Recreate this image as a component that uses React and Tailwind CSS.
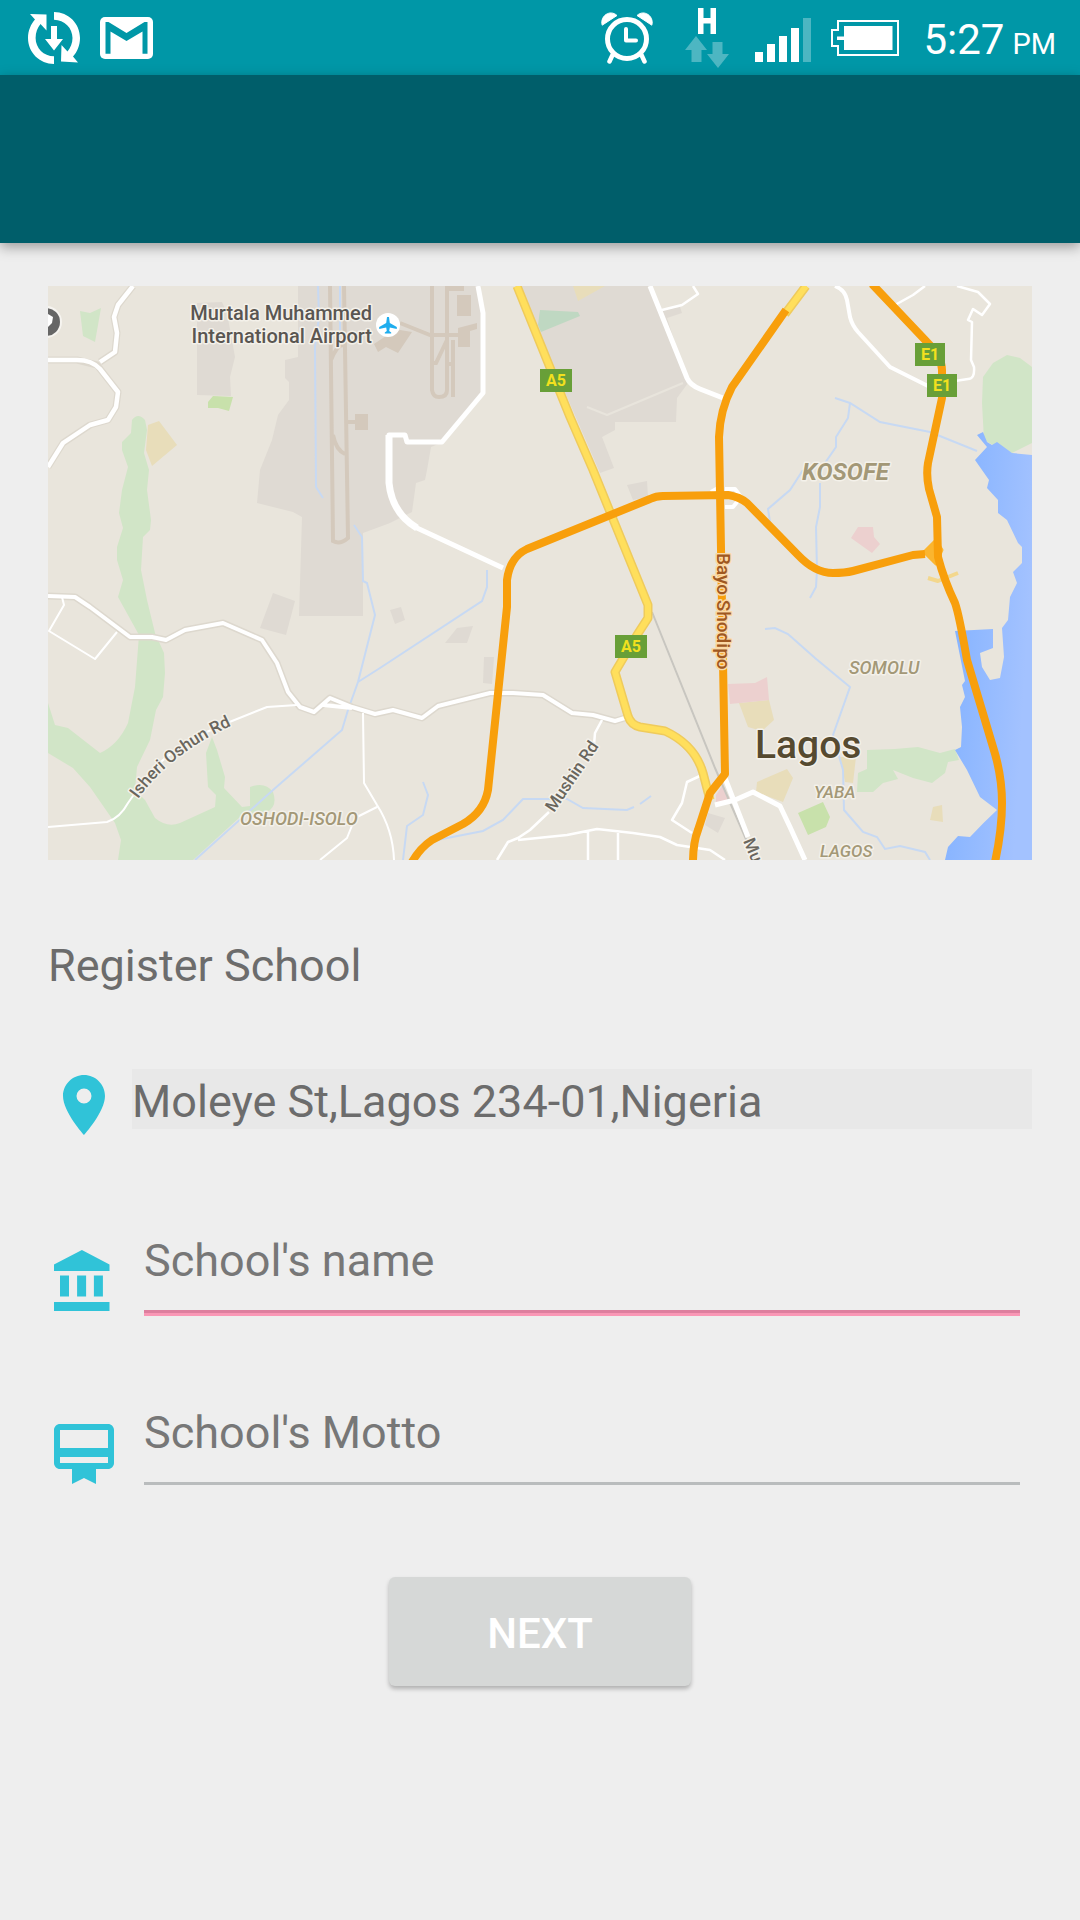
import React from "react";

const fillPath = {
  land: "#e9e5dc",
  built: "#dfdad3",
  park: "#d1e5c7",
  grass: "#c8e1ab",
  sand: "#e8ddba",
  pink: "#ecd0cf",
  apron: "#d4c9bc",
};

function SyncIcon() {
  return (
    <svg viewBox="0 0 52 52" className="size-[52px]" fill="#fff" aria-hidden="true">
      <path d="M26 0c14.500 0 26 11.600 26 26 0 7.500-3 14.300-7 18.500L50 50.500l-17-1L33.500 33l6 6.500C42.500 36 44.500 31 44.500 26 44.500 16 36.500 7.700 26 7.700Z" />
      <path d="M26 52C11.600 52 0 40.400 0 26 0 18.500 3 12 7 7.500L2 2l16.500.5V18.500L12.500 12C9.500 15.500 7.600 20.500 7.600 26c0 10 8 18.300 18.400 18.300Z" />
      <path d="M23 14h6v13h6L26 38.500 17 27h6Z" />
    </svg>
  );
}

function MailIcon() {
  return (
    <svg viewBox="0 0 53 42" className="h-[42px] w-[53px]" aria-hidden="true">
      <rect width="53" height="42" rx="5" fill="#fff" />
      <path d="M5.500 5H8.500L26.500 16 44.500 5h3v31.700h-5V14.500L26.500 24 10.500 14.500v22.200h-5Z" fill="#0097a7" />
    </svg>
  );
}

function AlarmIcon() {
  return (
    <svg viewBox="0 0 52 52" className="size-[52px]" fill="none" stroke="#fff" strokeLinecap="round" strokeLinejoin="round" aria-hidden="true">
      <circle cx="26" cy="27" r="19.500" strokeWidth="5" />
      <path d="M25 17v11.500h10" strokeWidth="4" />
      <path d="M11.500 43 8.500 49.500M40.500 43l3 6.500" strokeWidth="4.500" />
      <path d="M1 12.500C-1 4 9 -3 16 3.500L1.500 13ZM51 12.500C53 4 43 -3 36 3.500L50.500 13Z" fill="#fff" strokeWidth="1" />
    </svg>
  );
}

function DataIcon() {
  return (
    <svg viewBox="0 0 44 60" className="h-[60px] w-[44px]" aria-hidden="true">
      <path d="M13 0h5.500v10h7V0H31v26h-5.500V15.500h-7V26H13Z" fill="#fff" />
      <path d="M11 28 22 42h-5.500v12h-10V42H0ZM27.500 34h10v12H44L33 60 22 46h5.500Z" fill="#4db6c2" />
    </svg>
  );
}

function SignalIcon() {
  return (
    <svg viewBox="0 0 56 44" className="h-[44px] w-[56px]" fill="#fff" aria-hidden="true">
      <path d="M0 34h8v10H0ZM12 26h8v18h-8ZM24 18h8v26h-8ZM36 10h8v34h-8Z" />
      <path d="M48 0h8v44h-8Z" fill="#4db6c2" />
    </svg>
  );
}

function BatteryIcon() {
  return (
    <svg viewBox="0 0 68 36" className="h-[36px] w-[68px]" aria-hidden="true">
      <path d="M7 1H67V35H7V26H1V10H7Z" fill="none" stroke="#fff" strokeWidth="2" />
      <path d="M13 6H61.500V30H13V20H6V16.500H13Z" fill="#fff" />
    </svg>
  );
}

const PIN = "M12 2C8.130 2 5 5.130 5 9c0 5.250 7 13 7 13s7-7.750 7-13c0-3.870-3.130-7-7-7zm0 9.500a2.500 2.500 0 0 1 0-5 2.500 2.500 0 0 1 0 5z";
const BANK = "M4 10.500v7h3v-7H4zm5.700 0v7h3v-7h-3zM2 22.300h18.500v-3H2v3zm13.300-11.800v7h3v-7h-3zm-4-8.500L2 6.800v2.200h18.500V6.800l-9.200-4.800z";
const CARD = "M20 2H4c-1.110 0-2 .89-2 2v11c0 1.110.89 2 2 2h4v5l4-2 4 2v-5h4c1.110 0 2-.89 2-2V4c0-1.110-.89-2-2-2zm0 13H4v-2h16v2zm0-5H4V4h16v6z";

function FieldIcon({ d }) {
  return (
    <svg viewBox="0 0 24 24" className="size-[72px] shrink-0" fill="#30c3d8" aria-hidden="true">
      <path d={d} />
    </svg>
  );
}

function Shield({ x, y, w, label }) {
  return (
    <g>
      <rect x={x} y={y} width={w} height="23" fill="#689f38" />
      <text x={x + w / 2} y={y + 17} textAnchor="middle" fontSize="16" fontWeight="700" fill="#f2e01e">{label}</text>
    </g>
  );
}

function MapView() {
  return (
    <svg viewBox="48 286 984 574" className="block w-full" role="img" aria-label="Map of Lagos" fontFamily="Roboto, sans-serif">
      <defs>
        <linearGradient id="sea" x1="0" y1="0" x2="1" y2="0.3">
          <stop offset="0" stopColor="#7fb0ff" />
          <stop offset="1" stopColor="#a3c2ff" />
        </linearGradient>
        <path id="isheri" d="M138 799Q175 747 250 718" />
      </defs>
      <rect x="48" y="286" width="984" height="574" fill={fillPath.land} />

      <g fill={fillPath.built}>
        <path d="M298 286V357L285 360V378L289 382V400L278 415 272 440 260 470 257 503 293 512 302 517 299 616H363V533L390 523 412 512 416 483 425 480 427 470 431 447 443 442 483 393 481 286Z" />
        <path d="M197 303 222 302 227 313 235 357 230 377 231 396 197 395Z" />
        <path d="M519 286H648L662 310 680 307 682 313 667 318 688 383 677 398 676 422H615V430L602 437 614 468 600 473 567 397Z" />
        <path d="M627 485 647 481 648 497 633 500ZM273 593 295 601 286 635 260 628ZM390 610 401 607 405 620 395 624ZM445 643 457 628 473 626 467 643ZM484 657H494L492 684 483 683ZM708 813 725 818 718 833 705 825Z" />
      </g>

      <g fill={fillPath.park}>
        <path d="M80 311 90 313 101 308 95 342 83 336Z" />
        <path d="M132 420Q138 412 145 420L147 430 144 453 149 470 147 490 151 520 150 530 143 537 141 570 147 600 155 633 164 653 165 673 163 697 156 710 150 740 137 767 135 790 145 800 155 818Q167 828 180 823L215 807 216 795 208 787 206 753 212 737 217 750 225 777 224 788 242 807 250 806V787Q265 781 273 792 278 806 267 812L240 817 193 860H118L121 840 115 823 90 787 73 768 48 753V703L55 725 68 728 100 753Q118 745 128 723L135 687 139 635 118 597 123 580 117 560V547L123 528 119 513 122 490 128 467 122 450V442L131 433Z" />
        <path d="M1007 355 993 363 983 377 982 403 984 440 993 445 1012 453 1032 443V367L1020 358Z" />
        <path d="M867 750 895 749 918 747 940 753 955 749 959 760 948 762 945 773 932 783 913 778 893 770 898 779 883 783 873 792H857L858 773 867 769Z" />
      </g>
      <path d="M540 310 578 312 580 316 541 332 538 325Z" fill="#bfd8c2" />
      <path d="M208 402 213 396 233 397 229 411 218 408H208ZM798 813 823 802 830 817 826 827 808 835Z" fill={fillPath.grass} />
      <path d="M148 425 159 421 177 445 152 466 146 450ZM573 286H605L578 301ZM739 703 769 700 774 720 762 731 748 727ZM757 782 787 769 793 778 783 802 756 792ZM840 757H856L853 783 845 782ZM933 807 942 805 943 822 930 820Z" fill={fillPath.sand} />
      <path d="M728 684 755 683 767 677 769 700 730 704ZM858 527H873L874 537 880 544 872 553 851 538ZM716 795 722 786 731 800 716 802Z" fill={fillPath.pink} />

      <path
        d="M983 432 987 442 992 445 997 442 1012 453 1032 455V860H945L948 847 958 836 970 837Q983 823 997 810L980 797 967 770 955 750 961 747 962 727 960 707 965 697 962 685 965 681 955 631 993 629V648L980 653 982 667 990 680 1000 678 1004 657 1002 628 1008 620 1010 597 1017 583 1013 572 1022 563V547L1018 543 1007 520 998 513V500L987 488 989 480 975 460 987 447 977 435Z"
        fill="url(#sea)"
      />

      <g fill="none" stroke={fillPath.apron} strokeWidth="5">
        <path d="M330 286 333 541Q340 545 348 538L344 286M331 360Q337 345 343 345M333 435Q336 450 345 454M346 422H357" strokeWidth="4" />
        <path d="M432 286V390Q433 397 439 397 447 397 447 390V286M453 340V397M400 323 430 335H458M433 363H436L447 340M446 364H455" strokeWidth="4" />
      </g>
      <path d="M355 414H368V430H355ZM447 286H464V291H447ZM457 295H471V316H457ZM458 328 477 323V329L470 331V347H458ZM374 344 386 336 400 330 412 332 398 353 386 347 378 352Z" fill={fillPath.apron} />

      <g fill="none" stroke="#c7d9f3" strokeWidth="2">
        <path d="M318 286 319 317 315 347 316 487 323 498M340 286V330M354 525 362 537 363 581 367 583 375 615 358 682 348 710 342 730 273 790 195 860M358 682 380 668 482 601 487 587V570" />
        <path d="M423 782 428 795 423 815 407 826 403 860M437 840 483 831 503 820 523 799H567L583 808 627 810 634 807M640 804 651 796" />
        <path d="M835 398 850 403 880 422 930 432 977 451M850 403 848 418 836 437V447L825 463M803 470 790 490 768 509 770 522M820 483V507L816 527 817 570 816 587 810 598" />
        <path d="M765 629 775 628 788 634 815 658 850 687 833 735 843 770 844 810 863 832 877 837 885 849 900 846 925 852 930 860" />
      </g>

      <path d="M652 612 715 768 755 860" fill="none" stroke="#c8c6c0" strokeWidth="2" />

      <g fill="none" strokeLinejoin="round">
        <g stroke="#ddd8ce">
          <path d="M133 286 118 305 114 317 117 333 115 352 100 362M48 360H77L97 365 118 392 116 407 108 420 90 425 63 443 48 467M48 596 75 597 90 607 130 637H152L166 640 185 630 223 623 262 640 277 663 288 692 300 707 314 712 330 698 352 707 375 714 393 710 422 718 438 706 490 693H513L543 695 572 713 593 715 615 721 628 717" strokeWidth="7" />
        </g>
        <g stroke="#fff">
          <path d="M133 286 118 305 114 317 117 333 115 352 100 362M48 360H77Q92 360 100 369L118 392 116 407 108 420 90 425 63 443 48 467" strokeWidth="4.500" />
          <path d="M48 596 75 597 90 607 130 637H152L166 640 185 630 223 623 262 640 277 663 288 692 300 707 314 712 330 698 352 707 375 714 393 710 422 718 438 706 490 693H513L543 695 572 713 593 715 615 721 628 717M323 705 352 708" strokeWidth="4" />
          <path d="M62 597 64 605 49 631 95 659 117 632M48 827 107 822Q120 818 128 803L135 793Q160 750 227 723L267 707 297 705M363 713 364 783 377 805Q393 830 394 860M377 807 355 818 347 838 320 860" strokeWidth="2" />
          <path d="M478 286 483 313V393L442 442H407L405 435H389V483Q392 513 417 528L503 568" strokeWidth="5" />
          <path d="M389 435V483Q392 513 417 528" strokeWidth="7" />
          <path d="M650 286 687 378Q690 385 700 389L723 398M725 778 748 837M715 805 735 800 753 792 780 806 790 827 805 860" strokeWidth="5" />
          <path d="M835 286Q845 290 847 300L850 317Q852 325 858 332L890 367 930 387" strokeWidth="4" />
          <path d="M957 286 978 292 990 304 982 315 973 309 968 320 972 322 971 360 974 367Q975 379 968 379L955 381M895 305 913 295 925 286M662 310 682 305 698 294 693 286M602 720 595 733 594 745M549 812 530 830 518 838 508 842 497 860M518 840 567 835 597 829 633 833 660 837 677 845 710 850 725 860M588 831V860M618 833V860M702 775 687 782 682 803 672 820 692 833" strokeWidth="2.500" />
          <path d="M725 489H735L741 497 733 507H725M718 488 711 492" strokeWidth="4" />
        </g>
        <path d="M683 383 607 415 587 407" stroke="#e8e4dc" strokeWidth="2" />

        <path d="M517 286 570 417 593 470 648 605V618L637 635 615 672 628 716Q631 725 640 727L665 731Q695 745 703 773L710 800M806 286 785 314" stroke="#efcb5c" strokeWidth="9" />
        <path d="M517 286 570 417 593 470 648 605V618L637 635 615 672 628 716Q631 725 640 727L665 731Q695 745 703 773L710 800M806 286 785 314" stroke="#ffdf5c" strokeWidth="6" />
        <path d="M928 578 938 581 958 573" stroke="#f3d78d" strokeWidth="4" />
        <path d="M924 552 936 540 942 550 936 564Z" fill="#fbb52f" stroke="#fbb52f" strokeWidth="3" />

        <g stroke="#f89f0c" strokeWidth="8">
          <path d="M786 310 732 387Q720 410 719 437L725 774 710 793 698 830Q693 843 693 862" />
          <path d="M412 862Q420 848 432 840L463 824Q484 812 488 790L507 607V580Q510 557 527 549L650 499Q656 496 663 496L728 495Q740 497 747 503L798 555Q815 573 833 573 845 573 853 571L913 555 925 554" />
          <path d="M872 284 927 342Q942 357 942 370V398L928 463Q926 475 929 489L937 517 938 557Q944 580 955 603 959 614 967 660L993 747Q1002 775 1002 803 1002 830 995 862" />
        </g>
      </g>

      <g stroke="#f4f1ea" strokeWidth="3" strokeLinejoin="round" paintOrder="stroke">
        <g fontSize="20" fill="#5a5652" textAnchor="end" fontWeight="500">
          <text x="372" y="320">Murtala Muhammed</text>
          <text x="372" y="343">International Airport</text>
        </g>
        <g fontStyle="italic" fill="#a39877">
          <text x="802" y="480" fontSize="24" fontWeight="700">KOSOFE</text>
          <text x="849" y="674" fontSize="18" fontWeight="500">SOMOLU</text>
          <text x="814" y="798" fontSize="17" fontWeight="500">YABA</text>
          <text x="820" y="857" fontSize="17" fontWeight="500">LAGOS</text>
          <text x="240" y="825" fontSize="18" fontWeight="500">OSHODI-ISOLO</text>
        </g>
        <text x="755" y="758" fontSize="39" fontWeight="500" fill="#564a30">Lagos</text>
        <g fill="#6a665d" fontSize="17" fontWeight="500">
          <text><textPath href="#isheri">Isheri Oshun Rd</textPath></text>
          <text transform="translate(554 813) rotate(-56)">Mushin Rd</text>
          <text transform="translate(743 841) rotate(67)">Mu</text>
        </g>
        <text transform="translate(717 553) rotate(90)" fontSize="19" fontWeight="500" fill="#a0581f" stroke="#fbd9a5" strokeWidth="3">Bayo Shodipo</text>
      </g>

      <Shield x={540} y={369} w={32} label="A5" />
      <Shield x={615} y={635} w={32} label="A5" />
      <Shield x={915} y={343} w={30} label="E1" />
      <Shield x={927} y={374} w={30} label="E1" />

      <circle cx="388" cy="325" r="12" fill="#fff" />
      <path d="M387 317h2l.8 6 7 4v2l-7-1.500-.6 3.500 2 1.500v1h-6.400v-1l2-1.500-.6-3.500-7 1.500v-2l7-4Z" fill="#1fadee" />
      <circle cx="46" cy="322" r="16" fill="#f6f4f0" />
      <circle cx="46" cy="322" r="14" fill="#666" />
      <path d="M48 314 53 317 52 323 48 327Z" fill="#fff" />
    </svg>
  );
}

export default function App() {
  return (
    <div className="flex min-h-screen flex-col bg-[#eeeeee] font-['Roboto',sans-serif] text-[45px] leading-[60px] text-[#6c6c6c]">
      <div className="flex h-[75px] items-center justify-between bg-[#0097a7] pr-6 pl-7 text-white">
        <div className="flex items-center gap-5">
          <SyncIcon />
          <MailIcon />
        </div>
        <div className="flex items-center">
          <AlarmIcon />
          <div className="ml-8"><DataIcon /></div>
          <div className="mt-1 ml-[26px]"><SignalIcon /></div>
          <div className="ml-5"><BatteryIcon /></div>
          <p className="ml-6 pt-2 text-[42px] leading-[48px] whitespace-nowrap">
            5:27<span className="ml-2 text-[29px]">PM</span>
          </p>
        </div>
      </div>
      <header className="h-[168px] bg-[#005e6a] shadow-[0_4px_12px_rgba(0,0,0,0.35)]" />

      <main className="flex flex-col px-12 pt-[43px]">
        <MapView />
        <h1 className="mt-[76px]">Register School</h1>

        <form className="flex flex-col" onSubmit={(e) => e.preventDefault()}>
          <div className="mt-[73px] flex items-start gap-3">
            <label htmlFor="address" aria-label="Address"><FieldIcon d={PIN} /></label>
            <input id="address" type="text" readOnly defaultValue="Moleye St,Lagos 234-01,Nigeria" className="h-[60px] min-w-0 flex-1 bg-[#e8e8e8] pt-1 leading-[56px] outline-none" />
          </div>
          <div className="mt-[85px] flex items-end gap-6 pr-3">
            <label htmlFor="name" aria-label="School's name"><FieldIcon d={BANK} /></label>
            <input id="name" type="text" placeholder="School's name" className="h-[90px] min-w-0 flex-1 border-b-[3px] border-[#f997b5] pt-1 pb-[23px] leading-[60px] shadow-[inset_0_-3px_0_#dd7f9e] outline-none placeholder:text-[#777777]" />
          </div>
          <div className="mt-[82px] flex items-end gap-6 pr-3">
            <label htmlFor="motto" aria-label="School's Motto"><FieldIcon d={CARD} /></label>
            <input id="motto" type="text" placeholder="School's Motto" className="mb-[5px] h-[87px] min-w-0 flex-1 border-b-[3px] border-[#b9bcbd] pt-1 pb-5 leading-[60px] outline-none placeholder:text-[#777777]" />
          </div>
          <button type="submit" className="mt-[87px] h-[109px] w-[302px] self-center rounded-md bg-[#d6d8d7] pt-1 text-[42px] leading-[48px] font-medium text-white shadow-[0_3px_4px_rgba(0,0,0,0.25)]">
            NEXT
          </button>
        </form>
      </main>
    </div>
  );
}
